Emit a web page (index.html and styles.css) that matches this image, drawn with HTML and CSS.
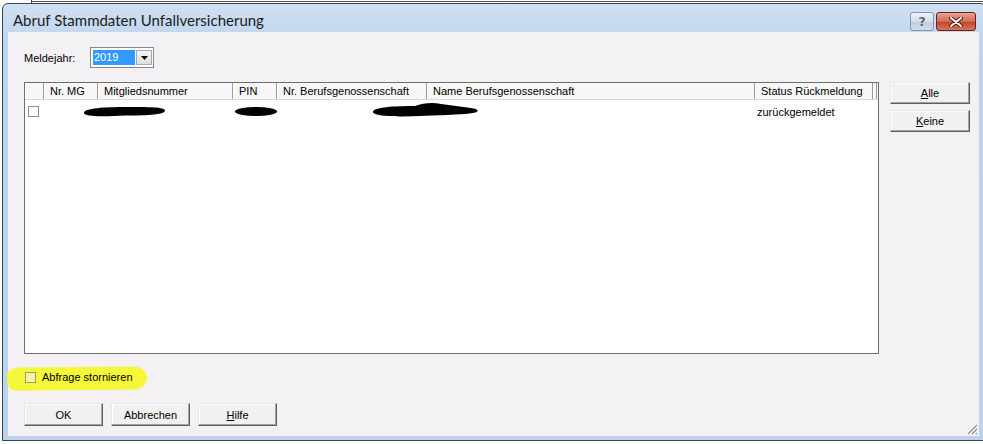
FILE: index.html
```html
<!DOCTYPE html>
<html lang="de">
<head>
<meta charset="utf-8">
<title>Abruf Stammdaten Unfallversicherung</title>
<link rel="stylesheet" href="styles.css">
</head>
<body>
<div class="behind"></div>
<div class="window">
  <div class="titlebar">
    <span class="title">Abruf Stammdaten Unfallversicherung</span>
    <div class="caption-btns">
      <span class="cbtn help">?</span>
      <span class="cbtn close"><svg width="14" height="10" viewBox="0 0 14 10"><path d="M2 1 L12 9 M12 1 L2 9" stroke="#5a1a12" stroke-width="4" stroke-linecap="round"/><path d="M2 1 L12 9 M12 1 L2 9" stroke="#fff" stroke-width="2" stroke-linecap="round"/></svg></span>
    </div>
  </div>
  <div class="client">
    <div class="year-row">
      <span class="year-label">Meldejahr:</span>
      <div class="combo">
        <span class="combo-val">2019</span>
        <span class="combo-btn"><svg width="7" height="4" viewBox="0 0 7 4"><path d="M0 0 H7 L3.5 4 Z" fill="#000"/></svg></span>
      </div>
    </div>
    <div class="main">
      <div class="list">
        <div class="list-head">
          <span class="hc c0"></span>
          <span class="hc c1">Nr. MG</span>
          <span class="hc c2">Mitgliedsnummer</span>
          <span class="hc c3">PIN</span>
          <span class="hc c4">Nr. Berufsgenossenschaft</span>
          <span class="hc c5">Name Berufsgenossenschaft</span>
          <span class="hc c6">Status Rückmeldung</span>
          <span class="hc c7"></span>
        </div>
        <div class="list-row">
          <span class="rc c0"><span class="chk"></span></span>
          <span class="rc c1"></span>
          <span class="rc c2"></span>
          <span class="rc c3"></span>
          <span class="rc c4"></span>
          <span class="rc c5"></span>
          <span class="rc c6">zurückgemeldet</span>
          <svg class="redact" width="855" height="22" viewBox="0 0 855 22">
            <path d="M59 14 C59 9 80 8 100 8 C124 8 140 8 140 11.5 C140 15.5 124 16.5 100 16.5 C80 17.5 59 18 59 14 Z" fill="#000"/>
            <ellipse cx="231" cy="12.5" rx="21" ry="4.5" fill="#000"/>
            <path d="M348 13 C348 8 370 7 390 7 C398 4 408 3 416 5 C426 6 436 8 446 9 C454 10 455 13 448 14 C435 16 410 16 395 17 C375 18 348 17.5 348 13 Z" fill="#000"/>
          </svg>
        </div>
      </div>
      <div class="side">
        <button class="btn"><u>A</u>lle</button>
        <button class="btn"><u>K</u>eine</button>
      </div>
    </div>
    <div class="cancel-row">
      <span class="marker"></span>
      <span class="chk chk-cancel"></span>
      <span class="cancel-text">Abfrage stornieren</span>
    </div>
    <div class="btn-row">
      <button class="btn">OK</button>
      <button class="btn">Abbrechen</button>
      <button class="btn"><u>H</u>ilfe</button>
    </div>
    <svg class="grip" width="12" height="12" viewBox="0 0 12 12">
      <path d="M11 2 L2 11 M11 6 L6 11 M11 10 L10 11" stroke="#8c8c8c" stroke-width="1.2"/>
      <path d="M12 3 L3 12 M12 7 L7 12" stroke="#fff" stroke-width="1"/>
    </svg>
  </div>
</div>
</body>
</html>
```

FILE: styles.css
```css
* { box-sizing: border-box; }
html, body { margin: 0; padding: 0; }
body {
  width: 983px;
  height: 444px;
  overflow: hidden;
  background: #fff;
  font-family: "Liberation Sans", Arial, sans-serif;
  font-size: 11px;
  color: #000;
}
.behind {
  height: 3px;
  margin-left: 31px;
  border-left: 1px solid #444;
  background: linear-gradient(#fff 1px, #555 1px, #555 2px, #fff 2px);
}
.window {
  margin-left: 2px;
  width: 984px;
  height: 438px;
  border: 1px solid #3a4452;
  border-radius: 6px 6px 0 0;
  background: linear-gradient(#d0e0f3, #bfd4ee 40px, #bcd2ec);
  padding: 0 6px 4px 5px;
  display: flex;
  flex-direction: column;
}
.titlebar {
  height: 28px;
  display: flex;
  align-items: flex-start;
  justify-content: space-between;
  padding-right: 3px;
}
.title {
  font-family: "Lato", "Open Sans", sans-serif;
  font-size: 15px;
  color: #1b1b1b;
  padding-left: 5px;
  margin-top: 7px;
  line-height: 18px;
}
.caption-btns {
  display: flex;
  gap: 2px;
  margin-top: 8px;
}
.cbtn {
  height: 19px;
  border-radius: 3px;
  display: flex;
  align-items: center;
  justify-content: center;
}
.help {
  width: 24px;
  border: 1px solid #8293aa;
  background: linear-gradient(#eef3f9, #d3deeb 50%, #bfcde0 51%, #d0dceb);
  color: #55657c;
  font-family: "DejaVu Sans", sans-serif;
  font-size: 13px;
  font-weight: bold;
  text-shadow: 0 0 1px #fff, 0 0 1px #fff;
}
.close {
  width: 40px;
  border: 1px solid #6b2218;
  background: linear-gradient(#e8a395, #d26a55 50%, #c0442c 51%, #d4735c);
}
.client {
  flex: 1;
  position: relative;
  background: #f4f1f4;
  padding: 15px 0 0 16px;
}
.year-row {
  display: flex;
  align-items: center;
  height: 21px;
}
.year-label {
  width: 66px;
  padding-top: 1px;
}
.combo {
  width: 64px;
  height: 21px;
  border: 1px solid #828790;
  background: #fff;
  display: flex;
  align-items: stretch;
  padding: 2px 1px 2px 2px;
}
.combo-val {
  width: 42px;
  background: #3399ff;
  color: #fff;
  padding-left: 1px;
  line-height: 15px;
}
.combo-btn {
  margin-left: auto;
  width: 16px;
  border: 1px solid #a9a9a9;
  background: linear-gradient(#f6f6f6, #dddddd);
  display: flex;
  align-items: center;
  justify-content: center;
}
.main {
  display: flex;
  margin-top: 14px;
}
.list {
  width: 855px;
  height: 272px;
  border: 1px solid #6e6e6e;
  background: #fff;
}
.list-head {
  display: flex;
  height: 17px;
  background: #f7f7f7;
  border-bottom: 1px solid #d8d8d8;
}
.hc {
  height: 16px;
  line-height: 16px;
  padding-left: 6px;
  border-right: 1px solid #9c9c9c;
  box-shadow: inset 1px 0 #fff;
  white-space: nowrap;
  overflow: hidden;
}
.c0 { width: 19px; }
.c1 { width: 54px; }
.c2 { width: 135px; }
.c3 { width: 44px; }
.c4 { width: 150px; }
.c5 { width: 328px; }
.c6 { width: 118px; }
.c7 { width: 4px; padding: 0; }
.list-row {
  position: relative;
  display: flex;
  height: 22px;
  align-items: center;
}
.rc {
  height: 22px;
  display: flex;
  align-items: center;
}
.rc.c0 { padding-left: 3px; padding-top: 1px; }
.rc.c6 { padding-left: 2px; padding-top: 1px; }
.chk {
  display: inline-block;
  width: 11px;
  height: 11px;
  border: 1px solid #8e8f8f;
  background: #fff;
}
.redact {
  position: absolute;
  left: 0;
  top: -1px;
}
.side {
  display: flex;
  flex-direction: column;
  gap: 6px;
  margin-left: 11px;
}
.btn {
  width: 80px;
  height: 22px;
  font-family: "Liberation Sans", Arial, sans-serif;
  font-size: 11px;
  color: #000;
  background: #f1f1f1;
  border: 1px solid;
  border-color: #e6e6e6 #5f5f5f #5f5f5f #e6e6e6;
  box-shadow: inset -1px -1px #a3a3a3, inset 1px 1px #fff;
  padding: 0;
}
.btn u { text-decoration: underline; }
.cancel-row {
  position: relative;
  display: flex;
  align-items: center;
  height: 20px;
  margin-top: 12px;
  gap: 6px;
  padding-left: 1px;
}
.marker {
  position: absolute;
  left: -17px;
  top: 1px;
  width: 140px;
  height: 23px;
  background: #f7f73a;
  border-radius: 12px 14px 12px 8px / 8px 11px 12px 12px;
  transform: rotate(-0.6deg);
}
.chk-cancel {
  position: relative;
  background: #f3f3a0;
  border-color: #9a9a70;
  margin-top: 2px;
}
.cancel-text {
  position: relative;
  padding-top: 2px;
}
.btn-row {
  display: flex;
  gap: 8px;
  margin-top: 17px;
}
.btn-row .btn { width: 79px; height: 23px; }
.grip {
  position: absolute;
  right: 1px;
  bottom: 1px;
}
```
